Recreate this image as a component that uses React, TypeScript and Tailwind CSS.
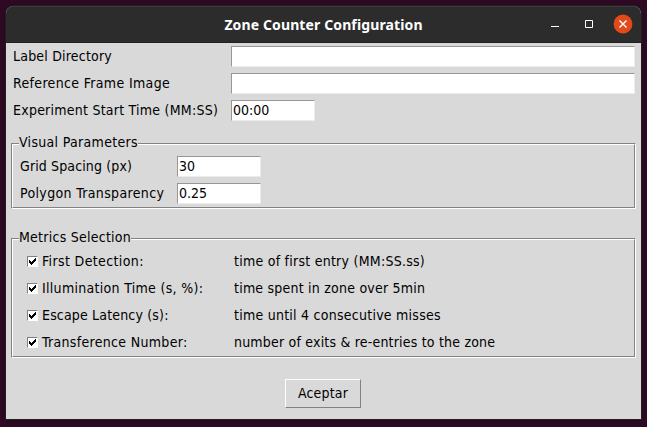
import type { ReactNode } from "react";

function Entry({ value = "", className }: { value?: string; className: string }) {
  return (
    <div
      className={`h-[21px] shrink-0 border border-t-[#979797] border-l-[#979797] border-r-[#ececec] border-b-[#ececec] bg-white pl-[1px] leading-[19px] whitespace-nowrap ${className}`}
    >
      {value}
    </div>
  );
}

function Field({ label, labelClass, children }: { label: string; labelClass: string; children: ReactNode }) {
  return (
    <div className="flex h-[27px] items-center">
      <span className={`shrink-0 whitespace-nowrap ${labelClass}`}>{label}</span>
      {children}
    </div>
  );
}

function Group({
  title,
  titleClass,
  className,
  children,
}: {
  title: string;
  titleClass: string;
  className: string;
  children: ReactNode;
}) {
  return (
    <div className={`ml-[5px] w-[625px] border border-t-[#828282] border-l-[#828282] border-r-white border-b-white ${className}`}>
      <div className="h-full border border-t-white border-l-white border-r-[#828282] border-b-[#828282]">
        <div className={`-mt-[12px] mb-px ml-[6px] h-[19px] w-fit bg-[#d9d9d9] leading-[19px] ${titleClass}`}>{title}</div>
        {children}
      </div>
    </div>
  );
}

function Check() {
  return (
    <span className="mr-[4px] flex size-[11px] shrink-0 border border-t-[#828282] border-l-[#828282] border-r-white border-b-white bg-white">
      <svg width="9" height="9" viewBox="0 0 9 9" shapeRendering="crispEdges">
        <path d="M7 1h1v3h-1v1h-1v1h-1v1h-1v1h-1v-1h-1v-1h-1v-3h1v1h1v1h1v-1h1v-1h1v-1h1z" fill="#000" />
      </svg>
    </span>
  );
}

const metrics = [
  {
    name: "First Detection:",
    nameClass: "tracking-[0.37px]",
    description: "time of first entry (MM:SS.ss)",
    descriptionClass: "tracking-[0.25px]",
  },
  {
    name: "Illumination Time (s, %):",
    nameClass: "tracking-[0.3px]",
    description: "time spent in zone over 5min",
    descriptionClass: "tracking-[0.22px]",
  },
  {
    name: "Escape Latency (s):",
    nameClass: "tracking-[0.17px]",
    description: "time until 4 consecutive misses",
    descriptionClass: "tracking-[0.25px]",
  },
  {
    name: "Transference Number:",
    nameClass: "tracking-[0.32px]",
    description: "number of exits & re-entries to the zone",
    descriptionClass: "tracking-[0.2px]",
  },
];

export default function App() {
  return (
    <div className="h-[427px] w-[647px] overflow-hidden bg-[#300a24] px-[6px] pt-[6px] font-['DejaVu_Sans_Condensed','DejaVu_Sans',sans-serif] text-[14px] font-stretch-condensed text-black">
      <div className="h-[413px] w-[635px] overflow-hidden rounded-t-[8px] bg-[#d9d9d9] shadow-[0_0_0_1px_#202020,0_2px_9px_rgba(0,0,0,0.35)]">
        <header className="relative flex h-[37px] items-center justify-center border-t border-t-[#3b3b3b] border-b border-b-[#202020] bg-[#2c2c2c]">
          <h1 className="font-['Noto_Sans',sans-serif] text-[14px] leading-[20px] font-bold tracking-[0.12px] whitespace-nowrap text-white">
            Zone Counter Configuration
          </h1>
          <div className="absolute top-[7px] right-[8px] flex">
            <svg width="82" height="20" viewBox="0 0 82 20" fill="none">
              <path d="M0 12.5h8M34.5 6.5h7v7h-7z" stroke="#fff" />
              <circle cx="72" cy="10" r="9.4" fill="#e2491b" />
              <path d="M68.5 6.5l7 7M75.5 6.5l-7 7" stroke="#fff" strokeWidth="1.4" />
            </svg>
          </div>
        </header>

        <section className="pl-[7px]">
          <Field label="Label Directory" labelClass="w-[218px] tracking-[0.2px]">
            <Entry className="w-[404px]" />
          </Field>
          <Field label="Reference Frame Image" labelClass="w-[218px] tracking-[0.34px]">
            <Entry className="w-[404px]" />
          </Field>
          <Field label="Experiment Start Time (MM:SS)" labelClass="w-[218px] tracking-[0.24px]">
            <Entry value="00:00" className="w-[84px]" />
          </Field>
        </section>

        <Group title="Visual Parameters" titleClass="tracking-[0.31px]" className="mt-[19px] h-[66px]">
          <div className="pl-[7px]">
            <Field label="Grid Spacing (px)" labelClass="w-[157px] tracking-[0.13px]">
              <Entry value="30" className="w-[84px]" />
            </Field>
            <Field label="Polygon Transparency" labelClass="w-[157px] tracking-[0.35px]">
              <Entry value="0.25" className="w-[84px]" />
            </Field>
          </div>
        </Group>

        <Group title="Metrics Selection" titleClass="tracking-[0.25px]" className="mt-[29px] h-[120px]">
          {metrics.map((m) => (
            <div key={m.name} className="flex h-[27px] items-center pl-[14px] whitespace-nowrap">
              <Check />
              <span className={`w-[192px] ${m.nameClass}`}>{m.name}</span>
              <span className={m.descriptionClass}>{m.description}</span>
            </div>
          ))}
        </Group>

        <div className="ml-[279px] mt-[21px] flex h-[29px] w-[76px] items-center justify-center border border-t-white border-l-white border-r-[#828282] border-b-[#828282] tracking-[0.15px]">
          Aceptar
        </div>
      </div>
    </div>
  );
}
